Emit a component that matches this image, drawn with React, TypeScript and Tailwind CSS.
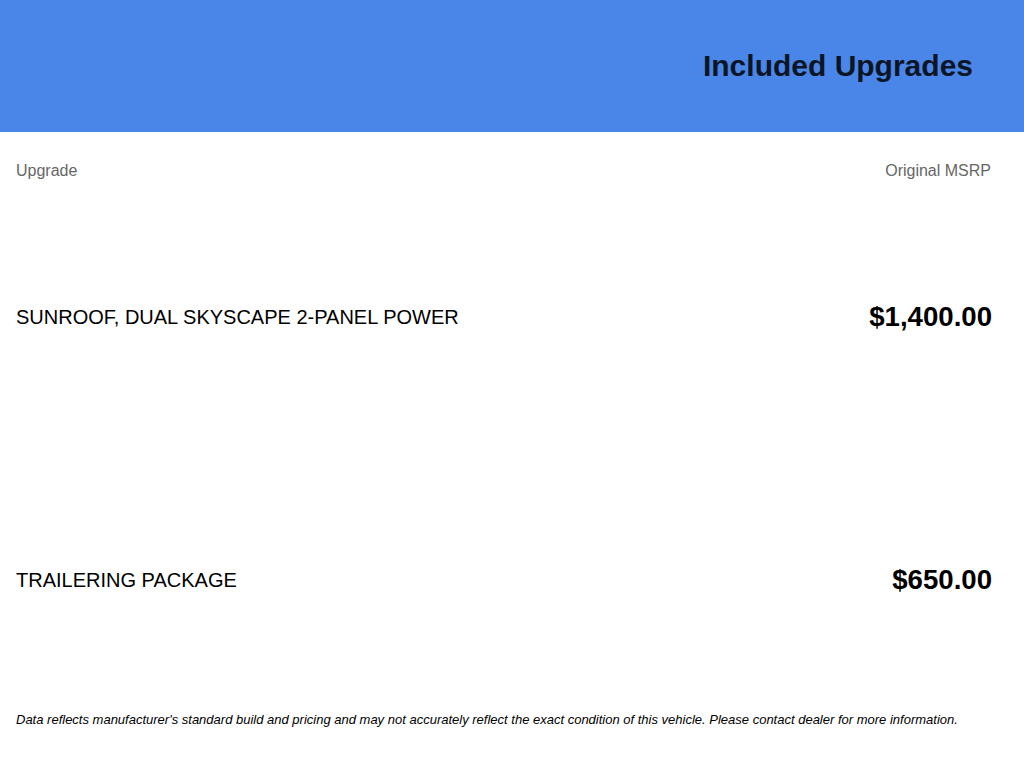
const upgrades = [
  { name: "SUNROOF, DUAL SKYSCAPE 2-PANEL POWER", price: "$1,400.00" },
  { name: "TRAILERING PACKAGE", price: "$650.00" },
];

export default function App() {
  return (
    <div className="min-h-screen bg-white font-['Liberation_Sans',Arial,sans-serif]">
      <header className="h-[132px] bg-[#4a86e8] flex items-center justify-end pr-[51px]">
        <h1 className="text-[30px] font-bold text-[#0b1526] leading-none">Included Upgrades</h1>
      </header>

      <div className="px-4 pr-[33px]">
        <div className="flex justify-between pt-[28px] text-[16px] leading-[22px] text-[#666666]">
          <span>Upgrade</span>
          <span>Original MSRP</span>
        </div>

        <div className="mt-[3px]">
          {upgrades.map((u) => (
            <div key={u.name} className="h-[263px] flex items-center justify-between">
              <span className="text-[20px] text-black">{u.name}</span>
              <span className="text-[27.6px] font-bold text-black mr-[-1px]">{u.price}</span>
            </div>
          ))}
        </div>

        <p className="mt-[1px] text-[13px] leading-4 italic text-black">
          Data reflects manufacturer's standard build and pricing and may not accurately reflect the exact condition of this vehicle. Please contact dealer for more information.
        </p>
      </div>
    </div>
  );
}
